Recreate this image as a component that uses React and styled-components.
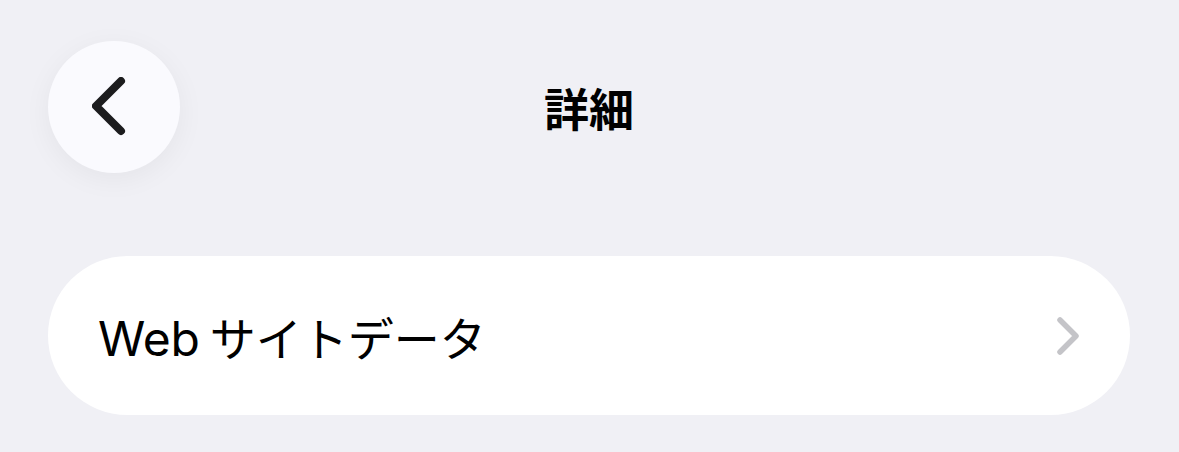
import React from "react"
import styled, { createGlobalStyle } from "styled-components"

const GlobalStyle = createGlobalStyle`
  html, body {
    margin: 0;
    padding: 0;
    background: #f0f0f5;
    font-family: Inter, "Noto Sans CJK JP", sans-serif;
    -webkit-font-smoothing: antialiased;
  }
`

const Page = styled.div`
  width: 1179px;
  height: 452px;
  box-sizing: border-box;
  padding: 41px 49px 0 48px;
  background: #f0f0f5;
  overflow: hidden;
`

const Header = styled.header`
  display: grid;
  grid-template-columns: 132px 1fr 132px;
  align-items: center;
  height: 132px;
`

const BackButton = styled.button`
  width: 132px;
  height: 132px;
  border-radius: 50%;
  border: none;
  padding: 0;
  background: #fafafe;
  box-shadow: 0 6px 28px rgba(0, 0, 0, 0.05);
  display: flex;
  align-items: center;
  justify-content: center;
  cursor: pointer;
`

const Title = styled.h1`
  margin: 0;
  text-align: center;
  font-family: "Noto Sans CJK JP", sans-serif;
  font-size: 45px;
  font-weight: 700;
  color: #000;
  line-height: 1;
`

const Card = styled.div`
  margin-top: 83px;
  height: 159px;
  border-radius: 80px;
  background: #fff;
  display: flex;
  align-items: center;
  justify-content: space-between;
  padding: 0 48px 0 50px;
`

const RowLabel = styled.span`
  display: flex;
  align-items: baseline;
  gap: 10px;
  color: #000;
  font-weight: 400;
`

const Latin = styled.span`
  font-family: Inter, sans-serif;
  font-size: 48px;
  letter-spacing: -0.2px;
`

const Kana = styled.span`
  font-family: "Noto Sans CJK JP", sans-serif;
  font-size: 46px;
`

const ChevronLeft = () => (
  <svg width="40" height="60" viewBox="0 0 40 60" style={{ marginLeft: -4 }}>
    <path
      d="M29 4 L4 29 L29 54"
      fill="none"
      stroke="#1c1c1e"
      strokeWidth="8"
      strokeLinecap="round"
      strokeLinejoin="round"
    />
  </svg>
)

const ChevronRight = () => (
  <svg width="26" height="40" viewBox="0 0 26 40">
    <path
      d="M4 4 L20 20 L4 36"
      fill="none"
      stroke="#c4c4c8"
      strokeWidth="5.5"
      strokeLinecap="round"
      strokeLinejoin="round"
    />
  </svg>
)

export default function App() {
  return (
    <>
      <GlobalStyle />
      <Page>
        <Header>
          <BackButton aria-label="戻る">
            <ChevronLeft />
          </BackButton>
          <Title>詳細</Title>
          <span />
        </Header>
        <Card>
          <RowLabel>
            <Latin>Web</Latin>
            <Kana>サイトデータ</Kana>
          </RowLabel>
          <ChevronRight />
        </Card>
      </Page>
    </>
  )
}
